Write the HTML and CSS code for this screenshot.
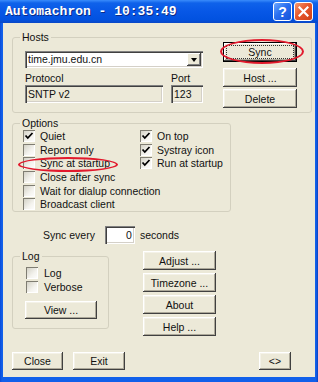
FILE: index.html
```html
<!DOCTYPE html>
<html lang="en">
<head>
<meta charset="UTF-8">
<title>Automachron</title>
<link rel="stylesheet" href="styles.css">
</head>
<body>

<div class="window">
    <!-- Title bar -->
    <div class="titlebar">
        <span class="title">Automachron - 10:35:49</span>
        <span class="tb-btn tb-help">?</span>
        <span class="tb-btn tb-close">
            <svg width="11" height="11" viewBox="0 0 11 11"><path d="M1.5 1.5 L9.5 9.5 M9.5 1.5 L1.5 9.5" stroke="#fff" stroke-width="2.2" stroke-linecap="square"/></svg>
        </span>
    </div>

    <div class="client">
        <!-- Hosts -->
        <fieldset class="group hosts">
            <legend>Hosts</legend>
            <div class="hosts-row">
                <div class="hosts-left">
                    <div class="combo sunken">
                        <span class="combo-text">time.jmu.edu.cn</span>
                        <span class="combo-arrow"><span class="tri"></span></span>
                    </div>
                    <div class="proto-row">
                        <div class="proto-col">
                            <div class="lbl">Protocol</div>
                            <div class="field sunken">SNTP v2</div>
                        </div>
                        <div class="port-col">
                            <div class="lbl">Port</div>
                            <div class="field sunken">123</div>
                        </div>
                    </div>
                </div>
                <div class="hosts-right">
                    <button class="btn default"><span class="focus">Sync</span></button>
                    <button class="btn host-btn">Host ...</button>
                    <button class="btn delete-btn">Delete</button>
                </div>
            </div>
        </fieldset>

        <!-- Options -->
        <fieldset class="group options">
            <legend>Options</legend>
            <div class="opts">
                <div class="opt-col1">
                    <div class="check"><span class="box"><svg width="12" height="12" viewBox="0 0 12 12"><path d="M2.5 5.5 L4.8 8 L9.5 3" fill="none" stroke="#000" stroke-width="1.8"/></svg></span>Quiet</div>
                    <div class="check"><span class="box"></span>Report only</div>
                    <div class="check"><span class="box"></span>Sync at startup</div>
                    <div class="check"><span class="box"></span>Close after sync</div>
                    <div class="check"><span class="box"></span>Wait for dialup connection</div>
                    <div class="check"><span class="box"></span>Broadcast client</div>
                </div>
                <div class="opt-col2">
                    <div class="check"><span class="box"><svg width="12" height="12" viewBox="0 0 12 12"><path d="M2.5 5.5 L4.8 8 L9.5 3" fill="none" stroke="#000" stroke-width="1.8"/></svg></span>On top</div>
                    <div class="check"><span class="box"><svg width="12" height="12" viewBox="0 0 12 12"><path d="M2.5 5.5 L4.8 8 L9.5 3" fill="none" stroke="#000" stroke-width="1.8"/></svg></span>Systray icon</div>
                    <div class="check"><span class="box"><svg width="12" height="12" viewBox="0 0 12 12"><path d="M2.5 5.5 L4.8 8 L9.5 3" fill="none" stroke="#000" stroke-width="1.8"/></svg></span>Run at startup</div>
                </div>
            </div>
        </fieldset>

        <div class="sync-row">
            <span>Sync every</span>
            <span class="num sunken">0</span>
            <span class="secs">seconds</span>
        </div>

        <div class="lower">
            <fieldset class="group log">
                <legend>Log</legend>
                <div class="log-body">
                    <div class="check log-check"><span class="box"></span>Log</div>
                    <div class="check log-check"><span class="box"></span>Verbose</div>
                    <button class="btn view-btn">View ...</button>
                </div>
            </fieldset>
            <div class="side-buttons">
                <button class="btn">Adjust ...</button>
                <button class="btn">Timezone ...</button>
                <button class="btn">About</button>
                <button class="btn">Help ...</button>
            </div>
        </div>

        <div class="bottom-row">
            <button class="btn close-btn">Close</button>
            <button class="btn exit-btn">Exit</button>
            <button class="btn more-btn">&lt;&gt;</button>
        </div>
    </div>

    <!-- red annotation rings drawn over the dialog -->
    <span class="ring ring-sync"></span>
    <span class="ring ring-startup"></span>
</div>

</body>
</html>
```

FILE: styles.css
```css
/* Base */
* {
    box-sizing: border-box;
}

html, body {
    margin: 0;
    padding: 0;
}

body {
    width: 318px;
    height: 382px;
    overflow: hidden;
    font-family: "Liberation Sans", Arial, sans-serif;
    font-size: 10.5px;
    color: #111;
    background: #fff;
}

/* Window frame */
.window {
    position: relative;
    width: 318px;
    height: 382px;
    display: flex;
    flex-direction: column;
    background: linear-gradient(to right, #0a4ad8, #1160ea 2px, #1160ea 316px, #0a40c0);
}

.titlebar {
    height: 23px;
    flex: none;
    display: flex;
    align-items: center;
    padding: 0 5px 0 5px;
    background: linear-gradient(to bottom, #3a8cfb 0, #0f62ea 3px, #0757e6 50%, #0252e0 85%, #0a47c6 100%);
}

.title {
    flex: 1;
    color: #fff;
    font-family: "Liberation Mono", "Courier New", monospace;
    font-weight: bold;
    font-size: 13px;
    text-shadow: 1px 1px 0 #0b2a86;
}

.tb-btn {
    width: 19px;
    height: 19px;
    border: 1px solid #fff;
    border-radius: 3px;
    display: flex;
    align-items: center;
    justify-content: center;
    color: #fff;
    font-family: "Liberation Sans", Arial, sans-serif;
    font-weight: bold;
    font-size: 14px;
}

.tb-help {
    background: linear-gradient(135deg, #6aa8ff, #2a6ff0 45%, #1552d8);
    margin-right: 2px;
}

.tb-close {
    background: linear-gradient(135deg, #f59a70, #e8572c 45%, #cf4015);
}

.client {
    flex: 1;
    min-height: 0;
    margin: 0 3px 5px 3px;
    padding: 8px 3px 0 9px;
    background: #ece9d8;
    display: flex;
    flex-direction: column;
}

/* Group boxes */
.group {
    margin: 0;
    padding: 0;
    border: 1px solid #d3d0bf;
    border-radius: 3px;
    min-width: 0;
}

.group legend {
    margin-left: 7px;
    padding: 0 2px;
    line-height: 12px;
    font-size: 10.5px;
}

.hosts {
    width: 300px;
    padding-bottom: 4px;
}

.hosts-row {
    display: flex;
    padding-left: 12px;
    gap: 20px;
}

.hosts-left {
    width: 178px;
}

.sunken {
    box-shadow: inset 1px 1px #808080, inset 2px 2px #404040, inset -1px -1px #fff, inset -2px -2px #d4d0c8;
}

.combo {
    margin-top: 8px;
    height: 17px;
    display: flex;
    align-items: center;
    background: #fff;
    padding: 2px 2px 2px 3px;
}

.combo-text {
    flex: 1;
    line-height: 13px;
}

.combo-arrow {
    width: 14px;
    height: 13px;
    display: flex;
    align-items: center;
    justify-content: center;
    background: #ece9d8;
    box-shadow: inset -1px -1px #404040, inset 1px 1px #fff, inset -2px -2px #808080;
}

.tri {
    width: 0;
    height: 0;
    border-left: 3.5px solid transparent;
    border-right: 3.5px solid transparent;
    border-top: 4px solid #000;
}

.proto-row {
    display: flex;
    gap: 8px;
}

.proto-col {
    width: 138px;
}

.port-col {
    width: 32px;
}

.lbl {
    margin-top: 4px;
    line-height: 12px;
}

.field {
    margin-top: 1px;
    height: 18px;
    line-height: 18px;
    padding-left: 3px;
    background: #ece9d8;
}

.hosts-right {
    width: 74px;
    margin-top: -1px;
    display: flex;
    flex-direction: column;
}

/* Buttons */
.btn {
    height: 19px;
    padding: 0;
    border: none;
    background: #ece9d8;
    font-family: inherit;
    font-size: 10.5px;
    color: #111;
    display: flex;
    align-items: center;
    justify-content: center;
    box-shadow: inset -1px -1px #404040, inset 1px 1px #fff, inset -2px -2px #aca899, inset 2px 2px #f4f2e8;
}

.btn.default {
    height: 20px;
    padding: 3px;
    box-shadow: inset 0 0 0 1px #000, inset -2px -2px #404040, inset 2px 2px #fff, inset -3px -3px #aca899;
}

.focus {
    flex: 1;
    align-self: stretch;
    display: flex;
    align-items: center;
    justify-content: center;
    border: 1px dotted #333;
}

.host-btn {
    margin-top: 6px;
}

.delete-btn {
    margin-top: 2px;
}

/* Options */
.options {
    width: 219px;
    margin-top: 4px;
}

.opts {
    display: flex;
    padding-left: 10px;
}

.opt-col1 {
    width: 117px;
    white-space: nowrap;
}

.check {
    display: flex;
    align-items: center;
    height: 13.7px;
    white-space: nowrap;
}

.box {
    width: 12px;
    height: 12px;
    flex: none;
    margin-right: 5px;
    display: flex;
    background: linear-gradient(135deg, #cfcdc0, #f4f3ee 60%, #fff);
    box-shadow: inset 1px 1px #7f7d72, inset -1px -1px #fff;
}

/* Sync every */
.sync-row {
    margin-top: 14px;
    height: 18px;
    display: flex;
    align-items: center;
    padding-left: 31px;
}

.num {
    margin-left: 10px;
    width: 30px;
    height: 18px;
    line-height: 18px;
    background: #fff;
    text-align: right;
    padding-right: 3px;
}

.secs {
    margin-left: 5px;
}

/* Log + side buttons */
.lower {
    margin-top: 6px;
    display: flex;
    align-items: flex-start;
}

.log {
    width: 97px;
}

.log-body {
    padding: 3.5px 0 9px 13px;
}

.log-check {
    height: 14px;
}

.log-check .box {
    margin-right: 6px;
}

.view-btn {
    margin: 7.5px 0 0 -1px;
    width: 72px;
    height: 18px;
}

.side-buttons {
    margin: 1px 0 0 34px;
    width: 73px;
    display: flex;
    flex-direction: column;
    gap: 3px;
}

/* Bottom row */
.bottom-row {
    margin-top: 16px;
    display: flex;
    padding-right: 21px;
}

.bottom-row .btn {
    height: 18px;
}

.close-btn {
    width: 51px;
}

.exit-btn {
    width: 52px;
    margin-left: 10px;
}

.more-btn {
    width: 32px;
    margin-left: auto;
}

/* Red annotation rings */
.ring {
    position: absolute;
    border: 2px solid #e2192c;
    border-radius: 50%;
}

.ring-sync {
    left: 220px;
    top: 39px;
    width: 84px;
    height: 25px;
}

.ring-startup {
    left: 18px;
    top: 157px;
    width: 100px;
    height: 15px;
}
```
